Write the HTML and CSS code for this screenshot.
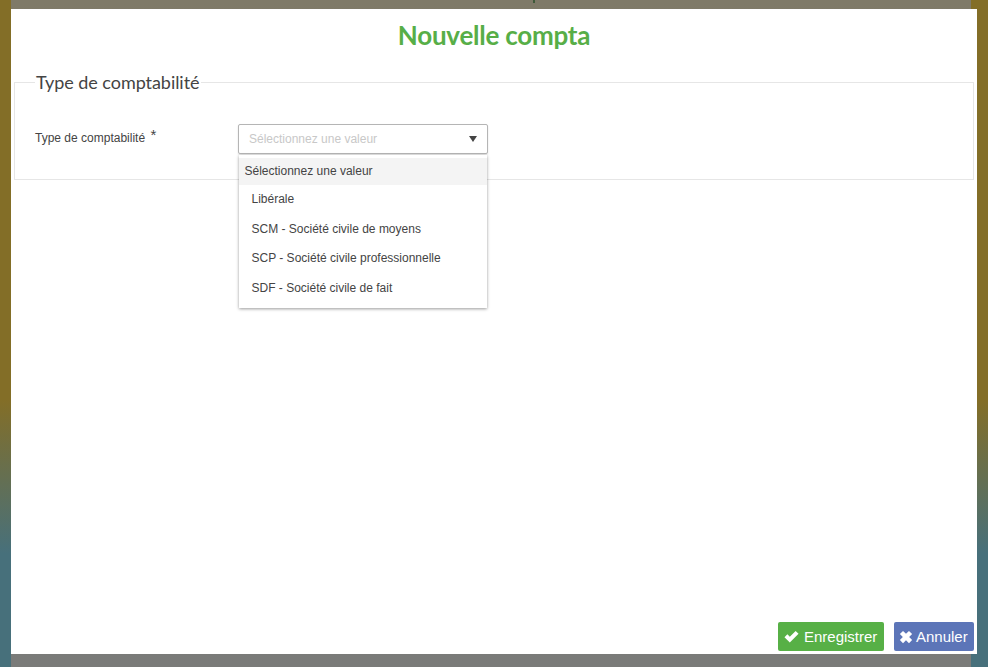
FILE: index.html
```html
<!DOCTYPE html>
<html lang="fr">
<head>
<meta charset="utf-8">
<title>Nouvelle compta</title>
<link rel="stylesheet" href="styles.css">
</head>
<body>
<div class="backdrop"><span class="behind-tail"></span></div>
<main class="modal">
  <h1 class="title">Nouvelle compta</h1>
  <div class="content">
    <fieldset class="group">
      <legend class="group-legend">Type de comptabilité</legend>
      <div class="field">
        <label class="field-label">Type de comptabilité <span class="req">*</span></label>
        <div class="select-wrap">
          <div class="select">
            <span class="placeholder">Sélectionnez une valeur</span>
            <span class="caret"></span>
          </div>
          <ul class="menu">
            <li class="opt opt-active">Sélectionnez une valeur</li>
            <li class="opt opt-1">Libérale</li>
            <li class="opt opt-2">SCM - Société civile de moyens</li>
            <li class="opt opt-3">SCP - Société civile professionnelle</li>
            <li class="opt opt-4">SDF - Société civile de fait</li>
          </ul>
        </div>
      </div>
    </fieldset>
  </div>
  <footer class="actions">
    <button class="btn btn-save" type="button">
      <svg class="ico" viewBox="0 0 16 16" width="15" height="15"><path d="M0.5 8.7 3.6 5.6 6.2 8.2 12.4 2 15.5 5.1 6.2 14.4Z" fill="#fff"/></svg>
      <span>Enregistrer</span>
    </button>
    <button class="btn btn-cancel" type="button">
      <svg class="ico" viewBox="0 0 16 16" width="14" height="14"><path d="M1 4.6 4.6 1 8 4.4 11.4 1 15 4.6 11.6 8 15 11.4 11.4 15 8 11.6 4.6 15 1 11.4 4.4 8Z" fill="#fff"/></svg>
      <span>Annuler</span>
    </button>
  </footer>
</main>
</body>
</html>
```
FILE: styles.css
```css
* { box-sizing: border-box; }
html, body { margin: 0; padding: 0; height: 100%; overflow: hidden; }
body {
  position: relative;
  width: 988px;
  height: 667px;
  font-family: "Liberation Sans", Arial, sans-serif;
  background: linear-gradient(180deg, #836e27 0%, #836e27 60%, #47707b 83%, #47707b 100%);
}
.backdrop {
  position: absolute;
  left: 11px;
  top: 0;
  width: 960px;
  height: 667px;
  background: linear-gradient(180deg, #7f7a68 0%, #7a7b79 100%);
}
.behind-tail {
  position: absolute;
  left: 522px;
  top: 0;
  width: 2px;
  height: 3px;
  background: #3f5a3a;
}
.modal {
  position: absolute;
  left: 11px;
  top: 9px;
  width: 966px;
  height: 645px;
  background: #fff;
  display: flex;
  flex-direction: column;
}
.title {
  margin: 0;
  height: 58px;
  padding-top: 6px;
  text-align: center;
  font-family: "Lato", sans-serif;
  font-weight: 700;
  font-size: 26px;
  letter-spacing: -0.25px;
  line-height: 40px;
  color: #57ae47;
}
.content { flex: 1; padding: 0 3px; }
.group {
  margin: 0;
  padding: 0 0 0 20px;
  height: 113px;
  border: 1px solid #e6e6e6;
  min-width: 0;
  position: relative;
}
.group-legend {
  padding: 0 2px 0 1px;
  margin-left: 0;
  font-family: "Lato", sans-serif;
  font-size: 18px;
  letter-spacing: -0.05px;
  line-height: 30px;
  color: #444;
}
.field {
  display: flex;
  align-items: flex-start;
  padding-top: 27px;
}
.field-label {
  width: 203px;
  font-size: 12px;
  line-height: 28px;
  color: #444;
  flex: none;
}
.req { font-size: 15px; line-height: 1; vertical-align: 2px; margin-left: 2px; }
.select-wrap { position: relative; width: 250px; }
.select {
  height: 30px;
  border: 1px solid #b5b5b5;
  border-radius: 2px;
  background: #fff;
  display: flex;
  align-items: center;
  justify-content: space-between;
  padding: 0 10px;
  box-shadow: 0 1px 2px rgba(0,0,0,.12);
}
.placeholder { font-size: 12px; color: #c8c8c8; }
.caret {
  width: 0;
  height: 0;
  border-left: 4px solid transparent;
  border-right: 4px solid transparent;
  border-top: 6px solid #444;
}
.menu {
  position: absolute;
  left: 1px;
  top: 31px;
  width: 248px;
  height: 153px;
  margin: 0;
  padding: 3px 0 0;
  list-style: none;
  background: #fff;
  box-shadow: 0 1px 3px rgba(0,0,0,.4);
  z-index: 2;
  font-size: 12px;
  color: #444;
}
.opt { height: 29.5px; line-height: 28px; padding: 0 12.5px; }
.opt-active { height: 27px; line-height: 27px; padding: 0 5.5px; background: #f4f4f4; }
.actions {
  display: flex;
  justify-content: flex-end;
  gap: 10px;
  padding: 0 3px 3px 0;
}
.btn {
  height: 29px;
  border: 0;
  border-radius: 2px;
  color: #fff;
  font-family: "Liberation Sans", sans-serif;
  font-size: 15px;
  padding: 0 6px;
  display: flex;
  align-items: center;
  gap: 5px;
}
.btn-cancel { gap: 3px; padding: 0 5px; }
.btn-save { width: 106px; background: #57b046; }
.btn-cancel { width: 80px; background: #5c75b8; }
```
